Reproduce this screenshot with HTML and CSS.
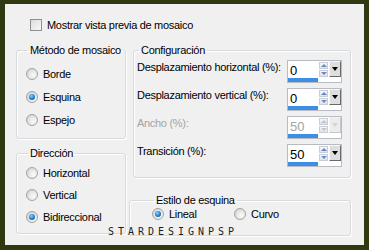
FILE: index.html
```html
<!DOCTYPE html>
<html lang="es">
<head>
    <meta charset="UTF-8">
    <meta name="viewport" content="width=device-width, initial-scale=1.0">
    <title>Mosaico</title>
    <link rel="stylesheet" href="styles.css">
</head>
<body>
    <div class="dialog">
        <label class="preview-row">
            <span class="check"></span>
            <span>Mostrar vista previa de mosaico</span>
        </label>

        <div class="groups">
            <div class="col">
                <fieldset class="group method">
                    <legend>Método de mosaico</legend>
                    <div class="radio-row"><span class="radio"></span>Borde</div>
                    <div class="radio-row"><span class="radio on"></span>Esquina</div>
                    <div class="radio-row"><span class="radio"></span>Espejo</div>
                </fieldset>

                <fieldset class="group direction">
                    <legend>Dirección</legend>
                    <div class="radio-row"><span class="radio"></span>Horizontal</div>
                    <div class="radio-row"><span class="radio"></span>Vertical</div>
                    <div class="radio-row"><span class="radio on"></span>Bidireccional</div>
                </fieldset>
            </div>

            <div class="col">
                <fieldset class="group config">
                    <legend>Configuración</legend>
                    <div class="field-row">
                        <span class="field-label">Desplazamiento horizontal (%):</span>
                        <div class="spin">
                            <div class="spin-field"><span class="spin-value">0</span><span class="spin-bar"></span></div>
                            <div class="spin-arrows"><span class="arrow up"></span><span class="arrow down"></span></div>
                            <span class="drop"></span>
                        </div>
                    </div>
                    <div class="field-row">
                        <span class="field-label">Desplazamiento vertical (%):</span>
                        <div class="spin">
                            <div class="spin-field"><span class="spin-value">0</span><span class="spin-bar"></span></div>
                            <div class="spin-arrows"><span class="arrow up"></span><span class="arrow down"></span></div>
                            <span class="drop"></span>
                        </div>
                    </div>
                    <div class="field-row disabled">
                        <span class="field-label">Ancho (%):</span>
                        <div class="spin">
                            <div class="spin-field"><span class="spin-value">50</span><span class="spin-bar"></span></div>
                            <div class="spin-arrows"><span class="arrow up"></span><span class="arrow down"></span></div>
                            <span class="drop"></span>
                        </div>
                    </div>
                    <div class="field-row">
                        <span class="field-label">Transición (%):</span>
                        <div class="spin">
                            <div class="spin-field"><span class="spin-value">50</span><span class="spin-bar"></span></div>
                            <div class="spin-arrows"><span class="arrow up"></span><span class="arrow down"></span></div>
                            <span class="drop"></span>
                        </div>
                    </div>
                </fieldset>

                <fieldset class="group corner">
                    <legend>Estilo de esquina</legend>
                    <div class="corner-options">
                        <div class="radio-row first"><span class="radio on"></span>Lineal</div>
                        <div class="radio-row"><span class="radio"></span>Curvo</div>
                    </div>
                </fieldset>
            </div>
        </div>

        <div class="watermark">
            <span>S</span><span>T</span><span>A</span><span>R</span><span>D</span><span>E</span><span>S</span><span>I</span><span>G</span><span>N</span><span>P</span><span>S</span><span>P</span>
        </div>
    </div>
</body>
</html>
```

FILE: styles.css
```css
body {
    margin: 0;
    padding: 0;
    background-color: #2e3811;
    font-family: "Liberation Sans", Arial, sans-serif;
    font-size: 11px;
    letter-spacing: -0.3px;
    color: #000;
    white-space: nowrap;
}

.dialog {
    position: relative;
    width: 359px;
    height: 241px;
    margin: 4px 5px 5px 5px;
    padding: 15px 14px 0 11px;
    box-sizing: border-box;
    background-color: #f0f0f0;
}

.preview-row {
    display: flex;
    align-items: center;
    gap: 5px;
    margin-left: 14px;
    height: 12px;
    line-height: 12px;
}

.check {
    width: 10px;
    height: 10px;
    border: 1px solid #8f8f8f;
    background: linear-gradient(135deg, #dcdcdc, #f8f8f8);
}

.groups {
    display: grid;
    grid-template-columns: 110px 218px;
    column-gap: 7px;
    margin-top: 13px;
}

.col {
    display: flex;
    flex-direction: column;
}

.group {
    margin: 0;
    padding: 0;
    min-width: 0;
    box-sizing: border-box;
    border: 1px solid #d5dadf;
    border-radius: 3px;
    box-shadow: inset 1px 1px 0 #fff, 1px 1px 0 #fff;
}

.group legend {
    padding: 0 2px;
    margin-left: 2px;
    line-height: 12px;
}

.method {
    height: 95px;
    padding: 6px 0 0 9px;
}

.method .radio-row {
    height: 23px;
}

.direction {
    height: 87px;
    margin-top: 8px;
    padding: 3px 0 0 9px;
}

.config {
    height: 134px;
    padding: 4px 8px 0 3px;
}

.corner {
    height: 42px;
    margin-top: 16px;
    margin-left: -4px;
    padding: 1px 0 0 22px;
}

.radio-row {
    display: flex;
    align-items: center;
    gap: 5px;
    height: 22px;
}

.radio {
    position: relative;
    width: 10px;
    height: 10px;
    border: 1px solid #a2a2a2;
    border-radius: 50%;
    background: radial-gradient(circle at 65% 65%, #fafafa 0, #e8e8e8 45%, #c8c8c8 100%);
}

.radio.on::after {
    content: "";
    position: absolute;
    left: 2px;
    top: 2px;
    width: 6px;
    height: 6px;
    border-radius: 50%;
    background: radial-gradient(circle at 40% 35%, #8fd3ff 0, #2b8ad8 45%, #0c3f7a 100%);
}

.field-row {
    display: flex;
    justify-content: space-between;
    height: 28px;
}

.field-label {
    margin-top: 1px;
    line-height: 12px;
}

.disabled .field-label,
.disabled .spin-value {
    color: #a3a3a3;
}

.spin {
    display: flex;
    flex-shrink: 0;
    width: 55px;
    height: 23px;
    box-sizing: border-box;
    border: 1px solid #b8bcc2;
    background-color: #fff;
}

.spin-field {
    display: flex;
    flex-direction: column;
    width: 30px;
}

.spin-value {
    flex: 1;
    padding: 3px 0 0 2px;
    font-size: 13px;
    line-height: 14px;
    letter-spacing: 0;
}

.spin-bar {
    height: 4px;
    background-color: #3c8ee6;
}

.spin-arrows {
    display: flex;
    flex-direction: column;
    gap: 1px;
    width: 9px;
    margin: 1px 0 0 1px;
}

.arrow {
    position: relative;
    height: 7px;
    border: 1px solid #c9ced6;
    box-sizing: border-box;
    background: linear-gradient(#f6f8fb, #dde3ec);
}

.arrow::after {
    content: "";
    position: absolute;
    left: 1px;
    border-left: 3px solid transparent;
    border-right: 3px solid transparent;
}

.arrow.up::after {
    top: 1px;
    border-bottom: 3px solid #6d88c9;
}

.arrow.down::after {
    top: 1px;
    border-top: 3px solid #6d88c9;
}

.disabled .arrow::after {
    border-bottom-color: #c4c4c4;
    border-top-color: #c4c4c4;
}

.drop {
    position: relative;
    width: 12px;
    height: 16px;
    margin: 0 0 0 1px;
    box-sizing: border-box;
    border: 1px solid #f4f4f4;
    border-right-color: #6a6a6a;
    border-bottom-color: #6a6a6a;
    background-color: #dedede;
}

.drop::after {
    content: "";
    position: absolute;
    left: 2px;
    top: 5px;
    border-left: 3px solid transparent;
    border-right: 3px solid transparent;
    border-top: 4px solid #000;
}

.disabled .drop {
    border-right-color: #c6c6c6;
    border-bottom-color: #c6c6c6;
    background-color: #ececec;
}

.disabled .drop::after {
    border-top-color: #d4d4d4;
}

.corner-options {
    display: flex;
}

.corner-options .radio-row {
    height: 14px;
}

.corner-options .first {
    width: 82px;
}

/* firma sobre el borde inferior */
.watermark {
    position: absolute;
    left: 103px;
    top: 222px;
    display: flex;
    font-family: "DejaVu Sans Mono", monospace;
    font-size: 10px;
    line-height: 12px;
    letter-spacing: 0;
    color: #1c1c1c;
}

.watermark span {
    width: 10px;
}
```
